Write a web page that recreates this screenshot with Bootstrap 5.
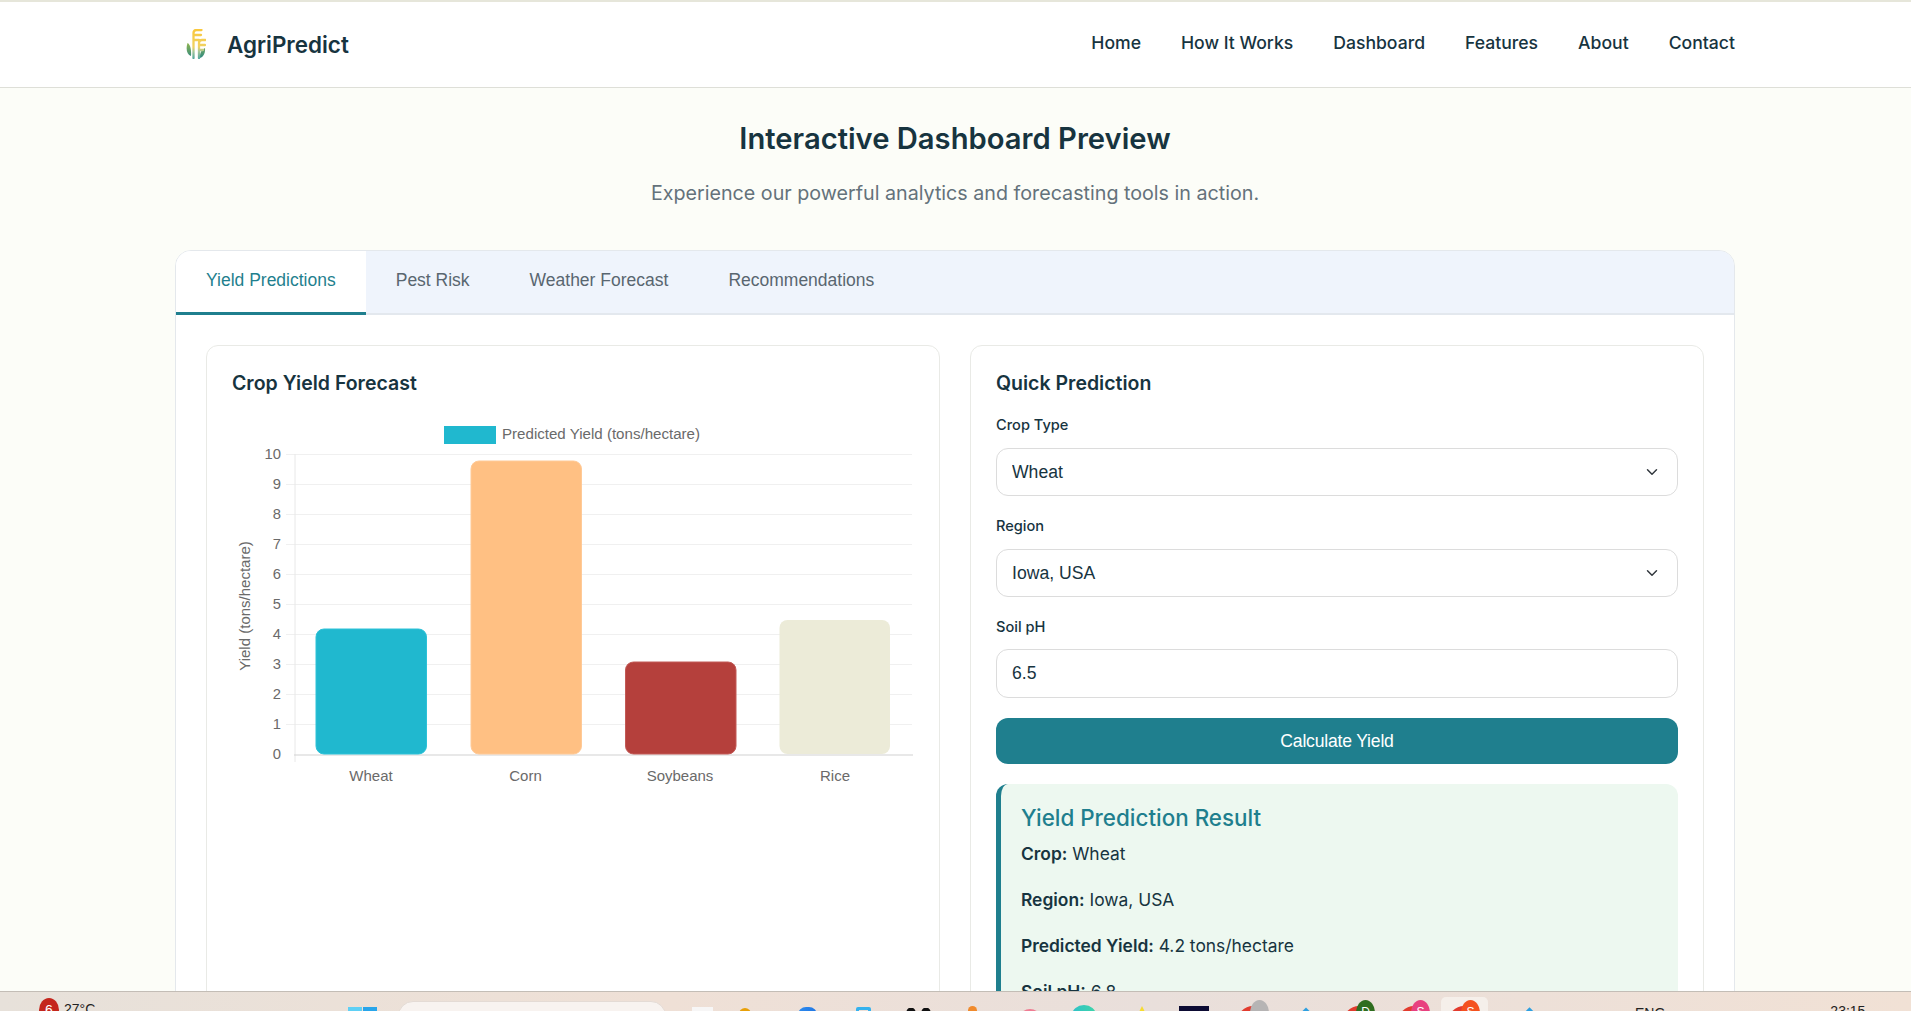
<!DOCTYPE html>
<html lang="en">
<head>
<meta charset="utf-8">
<title>AgriPredict</title>
<link href="https://cdn.jsdelivr.net/npm/bootstrap@5.3.0/dist/css/bootstrap.min.css" rel="stylesheet">
<style>
html,body{height:100%;overflow:hidden}
body{background:#fcfdf8;color:#17343f;font-family:"Inter","Liberation Sans",sans-serif;display:flex;flex-direction:column}
.page-scroll{flex:1 1 auto;min-height:0;overflow:hidden}
.wrap{width:1560px;margin:0 0 0 175px}
.topbar{background:#fff;border-top:2px solid #e6e6da;border-bottom:1px solid #dedfd8;height:88px;padding:0}
.brand-name{font-size:22.4px;font-weight:600;color:#17343f}
.brand-logo{width:20px;height:30px;margin-right:21px;margin-left:11px}
.navbar-nav{gap:40px}
.navbar-expand .navbar-nav .nav-link{font-size:17.6px;font-weight:500;color:#17343f;padding:0;margin-top:-3px}
.page-title{font-size:29.2px;font-weight:600;color:#17343f;text-align:center;margin:33px 0 0;line-height:36px}
.page-sub{font-size:19.700px;color:#64727b;text-align:center;margin:23px 0 0;line-height:27px}
.panel{margin-top:43px;background:#fff;border:1px solid #e4e8ec;border-radius:16px 16px 0 0;overflow:hidden}
.tab-strip{background:#eff4fc;border-bottom:2px solid #e3e8ee;height:64px;flex-wrap:nowrap}
.tab-strip .nav-link{font-family:"Liberation Sans",sans-serif;font-size:17.5px;color:#596670;padding:0 30px;height:64px;line-height:59px;border:0;border-radius:0}
.tab-strip .nav-link.active{background:#fff;color:#1f7f8e;border-bottom:3px solid #1f7f8e}
.panel-body{display:grid;grid-template-columns:734px 734px;gap:30px;padding:30px}
.box{border:1px solid #e9eae6;border-radius:12px;padding:25px;background:#fff;height:800px}
.box-title{font-size:19.5px;font-weight:600;color:#17343f;margin:0;line-height:24px}
.chart{display:block;margin:19px -25px 0}
.chart text{font-family:"Liberation Sans",sans-serif;fill:#6a6a6a}
.field-label{font-size:14.6px;font-weight:500;color:#17343f;margin:20px 0 0;line-height:20px;display:block}
.form-select,.form-control{margin-top:13px;border:1px solid #dcdcdc;border-radius:12px;font-family:"Liberation Sans",sans-serif;font-size:17.6px;color:#17343f;padding:0 15px}
.form-select{height:48px;padding-right:40px;background-position:right 17px center}
.form-control{height:49px;margin-top:12px}
.go-btn{display:block;width:100%;height:46px;margin-top:20px;background:#1f7f8e;color:#fff;border:0;border-radius:12px;font-family:"Liberation Sans",sans-serif;font-size:17.6px;letter-spacing:-.2px}
.result{margin-top:20px;background:#edf8f0;border-left:5px solid #1f7f8e;border-radius:12px;padding:20px}
.result h4{font-size:22.4px;font-weight:500;color:#1f7f8e;margin:0;line-height:27px}
.result p{font-size:17.4px;color:#17343f;margin:8px 0 0;line-height:30px}
.result p strong{font-weight:600}
.result p+p{margin-top:16px}
.taskbar{flex:0 0 20px;height:20px;overflow:hidden;display:flex;align-items:flex-start;background:linear-gradient(90deg,#e7e1da,#efe0d6 35%,#e9dfdb 60%,#f1e1d5);border-top:1px solid #c3bdb6;font-family:"Liberation Sans",sans-serif;font-size:14px;color:#222}
.tk{flex:0 0 auto;display:block}
.t-badge{width:20px;height:24px;margin:6px 0 0 39px;background:#c4261d;border-radius:50%;color:#fff;text-align:center;line-height:24px;font-size:14px}
.t-temp{margin:9px 0 0 5px;width:32px;line-height:16px}
.t-win{width:29px;height:24px;margin:15px 0 0 252px;background:linear-gradient(90deg,#5fd0f5 0 14px,#efe0d6 14px 15px,#28a5ea 15px)}
.t-search{width:268px;height:30px;margin:9px 0 0 21px;background:#f8f3f0;border:1px solid #e4dbd5;border-radius:15px}
.t-white{width:21px;height:20px;margin:15px 0 0 26px;background:#f7f6f6}
.t-amber{width:12px;height:20px;margin:16px 0 0 26px;background:#e8a008;border-radius:6px 6px 0 0}
.t-blue{width:19px;height:20px;margin:15px 0 0 47px;background:linear-gradient(135deg,#2f8df0,#1565d8);border-radius:8px 8px 0 0}
.t-cyan{width:15px;height:20px;margin:15px 0 0 39px;border:3px solid #35b2ee;border-radius:2px}
.t-black{width:25px;height:20px;margin:16px 0 0 35px;background:radial-gradient(circle at 5px 4px,#111 4px,transparent 5px),radial-gradient(circle at 20px 4px,#111 4px,transparent 5px)}
.t-orange{width:9px;height:20px;margin:14px 0 0 37px;background:#f08a2c;border-radius:5px 5px 0 0}
.t-pink{width:24px;height:20px;margin:17px 0 0 41px;background:#ef7d93;border-radius:12px 12px 0 0}
.t-teal{width:24px;height:20px;margin:13px 0 0 30px;background:linear-gradient(90deg,#2fc1c9,#3fd5a8);border-radius:50%}
.t-yellow{width:0;height:0;margin:14px 0 0 40px;border:6px solid transparent;border-bottom:12px solid #f6dc30;border-top:0}
.t-navy{width:30px;height:20px;margin:14px 0 0 31px;background:#0c0b33}
.t-duo{position:relative;width:32px;height:20px;margin:14px 0 0 28px;background:#e23b2e;border-radius:16px 16px 0 0}
.t-duo span{position:absolute;top:-6px;right:0;width:19px;height:26px;border-radius:50%;color:#fff;text-align:center;font-size:12px;line-height:24px}
.c-gray{background:#b6b4b4}.c-green{background:#2f6d1f}.c-pink{background:#e8407f}.c-red{background:#f4511e}
.t-drop{width:12px;height:12px;margin:18px 0 0 31px;background:#2d9fe0;transform:rotate(45deg)}
.t-duo.d2{margin-left:31px}.t-duo.d3{margin-left:23px}
.t-tile{width:47px;height:20px;margin:5px 0 0 11px;background:#f5efea;border-radius:5px 5px 0 0;padding:3px 0 0 7px}
.t-tile .t-duo{margin:6px 0 0 0}
.t-drop.b2{margin-left:35px;width:13px;height:13px}
.t-eng{margin:13px 0 0 99px;line-height:16px}
.t-time{margin:11px 0 0 165px;line-height:16px}
</style>
</head>
<body>
<div class="page-scroll">
  <nav class="navbar navbar-expand topbar">
    <div class="wrap d-flex align-items-center justify-content-between">
      <a class="navbar-brand d-flex align-items-center m-0 p-0" href="#">
        <svg class="brand-logo" viewBox="0 0 20 30" aria-hidden="true">
          <defs>
            <linearGradient id="lf" x1="0" y1="0" x2="0" y2="1"><stop offset="0" stop-color="#8fb44f"/><stop offset="1" stop-color="#2f8a82"/></linearGradient>
            <linearGradient id="st" gradientUnits="userSpaceOnUse" x1="0" y1="0" x2="0" y2="30"><stop offset="0" stop-color="#f9c83c"/><stop offset=".6" stop-color="#f0d262"/><stop offset=".75" stop-color="#a6c79a"/><stop offset="1" stop-color="#4ea59c"/></linearGradient>
          </defs>
          <path d="M1.500 14c3 1.500 4 7 3.500 13-4-1.500-5.500-7-3.500-13zM19 19c.5 5-1.500 9-5 10-.5-4 1-8 5-10z" fill="url(#lf)"/>
          <g fill="none" stroke="url(#st)" stroke-width="2.300" stroke-linecap="round">
            <path d="M7.500 29V4q0-3 3-3h5M8 6h7M8 11h5"/>
            <path d="M13 29V14q0-3 3-3h3.500M13.500 16h5.500M13.500 21h3.500"/>
          </g>
        </svg>
        <span class="brand-name">AgriPredict</span>
      </a>
      <ul class="navbar-nav flex-row">
        <li class="nav-item"><a class="nav-link" href="#">Home</a></li>
        <li class="nav-item"><a class="nav-link" href="#">How It Works</a></li>
        <li class="nav-item"><a class="nav-link" href="#">Dashboard</a></li>
        <li class="nav-item"><a class="nav-link" href="#">Features</a></li>
        <li class="nav-item"><a class="nav-link" href="#">About</a></li>
        <li class="nav-item"><a class="nav-link" href="#">Contact</a></li>
      </ul>
    </div>
  </nav>
  <main class="wrap">
    <h2 class="page-title">Interactive Dashboard Preview</h2>
    <p class="page-sub">Experience our powerful analytics and forecasting tools in action.</p>
    <section class="panel">
      <ul class="nav tab-strip">
        <li class="nav-item"><a class="nav-link active" href="#">Yield Predictions</a></li>
        <li class="nav-item"><a class="nav-link" href="#">Pest Risk</a></li>
        <li class="nav-item"><a class="nav-link" href="#">Weather Forecast</a></li>
        <li class="nav-item"><a class="nav-link" href="#">Recommendations</a></li>
      </ul>
      <div class="panel-body">
        <div class="box">
          <h3 class="box-title">Crop Yield Forecast</h3>
          <svg class="chart" width="734" height="390" viewBox="207 414 734 390" role="img" aria-label="Crop yield bar chart">
            <rect x="444" y="426" width="52" height="18" fill="#20b8cf"/>
            <text x="502" y="439" font-size="15.1">Predicted Yield (tons/hectare)</text>
            <g stroke="#f0f0f0" stroke-width="1">
              <path d="M286 454.500H912M286 484.500H912M286 514.500H912M286 544.500H912M286 574.500H912M286 604.500H912M286 634.500H912M286 664.500H912M286 694.500H912M286 724.500H912"/>
              <path d="M295 454V762" stroke="#e8e8e8"/>
            </g>
            <path d="M294 755H913" stroke="#d2d2d2" stroke-width="1.2"/>
            <g font-size="14.8" text-anchor="end">
              <text x="281" y="459">10</text><text x="281" y="489">9</text><text x="281" y="519">8</text><text x="281" y="549">7</text><text x="281" y="579">6</text><text x="281" y="609">5</text><text x="281" y="639">4</text><text x="281" y="669">3</text><text x="281" y="699">2</text><text x="281" y="729">1</text><text x="281" y="759">0</text>
            </g>
            <text transform="translate(250 606) rotate(-90)" text-anchor="middle" font-size="15">Yield (tons/hectare)</text>
            <path d="M316 637a8 8 0 0 1 8-8h94.500a8 8 0 0 1 8 8v109a8 8 0 0 1-8 8h-94.500a8 8 0 0 1-8-8z" fill="#20b8cf" stroke="#2cc2d8"/>
            <path d="M471 469a8 8 0 0 1 8-8h94.500a8 8 0 0 1 8 8v277a8 8 0 0 1-8 8h-94.500a8 8 0 0 1-8-8z" fill="#ffc083" stroke="#ffca97"/>
            <path d="M625.500 670a8 8 0 0 1 8-8h94.500a8 8 0 0 1 8 8v76a8 8 0 0 1-8 8h-94.500a8 8 0 0 1-8-8z" fill="#b5403c" stroke="#c25a56"/>
            <path d="M779.500 628a8 8 0 0 1 8-8h94.500a8 8 0 0 1 8 8v118a8 8 0 0 1-8 8h-94.500a8 8 0 0 1-8-8z" fill="#ecebd8"/>
            <g font-size="15" text-anchor="middle">
              <text x="371" y="781">Wheat</text><text x="525.500" y="781">Corn</text><text x="680" y="781">Soybeans</text><text x="835" y="781">Rice</text>
            </g>
          </svg>
        </div>
        <div class="box">
          <h3 class="box-title">Quick Prediction</h3>
          <label class="field-label" for="crop">Crop Type</label>
          <select id="crop" class="form-select"><option>Wheat</option></select>
          <label class="field-label" for="region">Region</label>
          <select id="region" class="form-select"><option>Iowa, USA</option></select>
          <label class="field-label" for="ph">Soil pH</label>
          <input id="ph" class="form-control" type="text" value="6.5">
          <button class="btn go-btn" type="button">Calculate Yield</button>
          <div class="result">
            <h4>Yield Prediction Result</h4>
            <p><strong>Crop:</strong> Wheat</p>
            <p><strong>Region:</strong> Iowa, USA</p>
            <p><strong>Predicted Yield:</strong> 4.2 tons/hectare</p>
            <p><strong>Soil pH:</strong> 6.8</p>
          </div>
        </div>
      </div>
    </section>
  </main>
</div>
<footer class="taskbar">
  <span class="tk t-badge">6</span><span class="tk t-temp">27°C</span>
  <span class="tk t-win"></span><span class="tk t-search"></span>
  <span class="tk t-white"></span><span class="tk t-amber"></span><span class="tk t-blue"></span><span class="tk t-cyan"></span><span class="tk t-black"></span>
  <span class="tk t-orange"></span><span class="tk t-pink"></span><span class="tk t-teal"></span><span class="tk t-yellow"></span><span class="tk t-navy"></span>
  <span class="tk t-duo"><span class="c-gray"></span></span><span class="tk t-drop"></span>
  <span class="tk t-duo d2"><span class="c-green">D</span></span><span class="tk t-duo d3"><span class="c-pink">S</span></span>
  <span class="tk t-tile"><span class="tk t-duo"><span class="c-red">S</span></span></span>
  <span class="tk t-drop b2"></span>
  <span class="tk t-eng">ENG</span><span class="tk t-time">23:15</span>
</footer>
</body>
</html>
